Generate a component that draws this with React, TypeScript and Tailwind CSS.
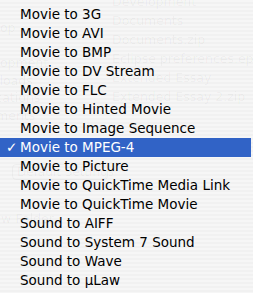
import React from "react";

const items = [
  "Movie to 3G",
  "Movie to AVI",
  "Movie to BMP",
  "Movie to DV Stream",
  "Movie to FLC",
  "Movie to Hinted Movie",
  "Movie to Image Sequence",
  "Movie to MPEG-4",
  "Movie to Picture",
  "Movie to QuickTime Media Link",
  "Movie to QuickTime Movie",
  "Sound to AIFF",
  "Sound to System 7 Sound",
  "Sound to Wave",
  "Sound to \u00b5Law",
];

const files = [
  "Development",
  "Documents",
  "Documents.zip",
  "Eclipse preferences.epf",
  "Extended Essay",
  "Extended Essay 2.zip",
];

const side = ["Desktop", "iPod", "Development", "Downloads", "Applications", "Documents"];

export default function App() {
  return (
    <div
      className="relative w-[253px] h-[293px] overflow-hidden bg-[repeating-linear-gradient(to_bottom,#f6f6f6_0px,#f6f6f6_2px,#f1f1f1_2px,#f1f1f1_4px)]"
      style={{ fontFamily: '"DejaVu Sans", "Noto Sans", sans-serif' }}
    >
      {/* faint window content behind the translucent menu */}
      <div className="absolute inset-0 text-black/[0.045] text-[12.5px] pointer-events-none flex">
        <div className="flex flex-col w-[112px] shrink-0 pt-[19px]">
          {side.map((s) => (
            <div key={s} className="h-[17.5px] leading-[17.5px] -ml-[36px] whitespace-nowrap">
              {s}
            </div>
          ))}
          <div className="mt-[40px] ml-[12px] h-[16px] w-[96px] rounded border border-black/[0.03] text-[12px] leading-[14px] px-[4px] whitespace-nowrap">
            Default Settings
          </div>
          <div className="mt-[30px] -ml-[16px] whitespace-nowrap">New Folder</div>
        </div>
        <div className="flex flex-col -mt-[8px]">
          {files.map((f) => (
            <div key={f} className="h-[19px] leading-[19px] whitespace-nowrap">
              {f}
            </div>
          ))}
        </div>
      </div>

      {/* menu */}
      <div className="relative flex flex-col pt-[5px] text-[13.5px] text-black">
        {items.map((it) => {
          const sel = it === "Movie to MPEG-4";
          return (
            <div
              key={it}
              className={
                sel
                  ? "relative h-[19px] leading-[19px] pl-[20px] mr-[2px] bg-[#3163c6] text-white whitespace-nowrap"
                  : "relative h-[19px] leading-[19px] pl-[20px] whitespace-nowrap"
              }
            >
              {sel && <span className="absolute left-[6px] top-0 font-bold">{"\u2713"}</span>}
              {it}
            </div>
          );
        })}
      </div>
    </div>
  );
}
